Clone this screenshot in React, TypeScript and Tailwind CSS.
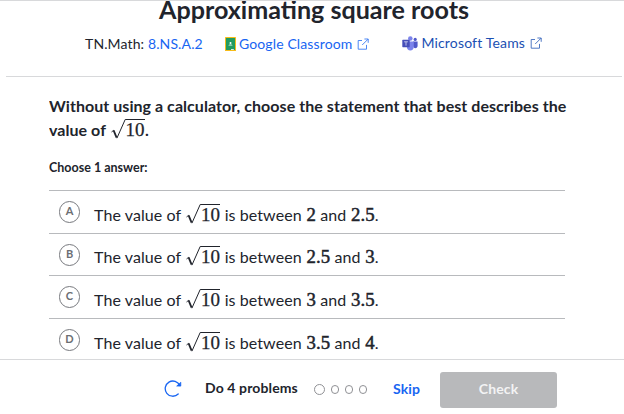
import type { ReactNode } from "react";

const ANSWERS = [
  { letter: "A", low: "2", high: "2.5" },
  { letter: "B", low: "2.5", high: "3" },
  { letter: "C", low: "3", high: "3.5" },
  { letter: "D", low: "3.5", high: "4" },
];

function Num({ children }: { children: ReactNode }) {
  return (
    <span className="ml-[0.5px] font-['Liberation_Serif',serif] text-[18.8px] leading-none tracking-[0.15px] [-webkit-text-stroke:0.5px_#21242c]">
      {children}
    </span>
  );
}

function Root({ children }: { children: ReactNode }) {
  return (
    <span className="mr-[0.5px] ml-[1px] inline-flex items-baseline">
      <svg width="15" height="20" viewBox="0 0 15 20" fill="none" className="self-start">
        <path d="M0.5 13 L2.8 11.2" stroke="#21242c" strokeWidth="0.9" />
        <path d="M2.6 11.4 L5.6 18.6" stroke="#21242c" strokeWidth="1.8" />
        <path d="M5.9 19.2 L14.2 0.5 H15" stroke="#21242c" strokeWidth="1" />
      </svg>
      <span className="border-t border-[#21242c] pt-[1px] font-['Liberation_Serif',serif] text-[19px] leading-[17px] font-normal tracking-normal [-webkit-text-stroke:0.25px_#21242c]">
        {children}
      </span>
    </span>
  );
}

function ExternalIcon() {
  return (
    <svg
      width="12"
      height="12"
      viewBox="0 0 12 12"
      fill="none"
      stroke="currentColor"
      strokeWidth="0.9"
      className="opacity-85"
    >
      <path d="M5 2.5H1.2v8.7h8.3V6.9" />
      <path d="M7.4 1h3.8v3.8M11.1 1.1 5.2 7" />
    </svg>
  );
}

function ClassroomIcon() {
  return (
    <svg width="11" height="14" viewBox="0 0 11 14">
      <rect width="11" height="14" rx=".6" fill="#f6bb18" />
      <rect x="1" y="1" width="9" height="12" fill="#219b61" />
      <circle cx="5.5" cy="6" r="1" fill="#fff" />
      <path d="M3.4 8.5c0-1.5 4.2-1.5 4.2 0z" fill="#e4f4eb" />
      <path d="M6 12h2.8v1H6z" fill="#d8eee2" />
    </svg>
  );
}

function TeamsIcon() {
  return (
    <svg width="16" height="15" viewBox="0 0 16 15">
      <circle cx="13.2" cy="3.4" r="1.6" fill="#5059c9" />
      <path d="M11 5.6h4.6v4.2c0 1.6-1 2.4-2.3 2.4-1.2 0-2.3-.8-2.3-2.4z" fill="#5059c9" />
      <circle cx="8.3" cy="2.5" r="2.3" fill="#7b83eb" />
      <path d="M4.8 5.6h7v5c0 2.4-1.5 4-3.5 4s-3.5-1.6-3.5-4z" fill="#7b83eb" />
      <rect x=".3" y="3.8" width="7.4" height="7.4" rx=".6" fill="#464eb8" />
      <path d="M2.1 5.8h3.8M4 5.8v3.8" stroke="#c9ccf0" strokeWidth=".9" />
    </svg>
  );
}

function RestartIcon() {
  return (
    <svg width="18" height="18" viewBox="0 0 18 18" fill="none" stroke="#1865f2" strokeWidth="1.3">
      <path d="M15.8 5.6A7.6 7.6 0 1 0 14.2 14" strokeLinecap="round" />
      <path d="M16.8 2.2v3.9h-4.1z" fill="#1865f2" strokeWidth="0.7" strokeLinejoin="round" />
    </svg>
  );
}

export default function App() {
  return (
    <div className="flex h-[414px] w-[624px] flex-col overflow-hidden border-t border-[#d8d9db] bg-white font-['Lato',sans-serif] text-[#21242c]">
      <header className="mr-[2px] ml-[6px] h-[76px] shrink-0 border-b border-[#d8d9db]">
        <h1 className="ml-[153px] h-[24px] text-[25.1px] leading-[17px] font-bold whitespace-nowrap">
          Approximating square roots
        </h1>
        <div className="mt-[8px] ml-[79px] flex h-[22px] items-center text-[14px] leading-[22px] tracking-[0.12px] whitespace-nowrap">
          <span className="w-[140px]">
            TN.Math: <a className="text-[#1865f2]">8.NS.A.2</a>
          </span>
          <a className="flex w-[177px] items-center text-[#1865f2]">
            <ClassroomIcon />
            <span className="mr-[5px] ml-[3px]">Google Classroom</span>
            <ExternalIcon />
          </a>
          <a className="-mt-[2px] flex items-center text-[#1b50b3]">
            <TeamsIcon />
            <span className="mr-[5px] ml-[3.4px] tracking-[0.17px]">Microsoft Teams</span>
            <ExternalIcon />
          </a>
        </div>
      </header>

      <main className="mx-[49px] min-h-0 flex-1 overflow-hidden">
        <div className="mt-[17px] text-[16px] leading-[24px] font-bold tracking-[0.05px] whitespace-nowrap">
          <p className="h-[24px]">Without using a calculator, choose the statement that best describes the</p>
          <p className="h-[24px]">
            value of <Root>10</Root>.
          </p>
        </div>
        <p className="mt-[16px] text-[12.5px] leading-[20px] font-bold">Choose 1 answer:</p>
        <ul className="mt-[12px] w-[516px]">
          {ANSWERS.map((a) => (
            <li key={a.letter} className="flex h-[42.6px] border-t border-[#b8babd] pl-[10px]">
              <span className="mt-[10px] flex h-[22px] w-[21px] items-center justify-center rounded-full border border-[#77797e] pb-[1px] text-[11px] font-bold text-[#6c6e73]">
                {a.letter}
              </span>
              <p className="mt-[11.8px] ml-[14px] h-[24px] text-[16px] leading-[24px] tracking-[0.08px] whitespace-nowrap">
                The value of <Root>10</Root> is between <Num>{a.low}</Num> and <Num>{a.high}</Num>.
              </p>
            </li>
          ))}
        </ul>
      </main>

      <footer className="flex h-[55px] shrink-0 items-start border-t border-[#d8d9db] pt-[12px] pl-[164px] whitespace-nowrap">
        <div className="flex h-[34px] w-[41px] items-center">
          <RestartIcon />
        </div>
        <span className="w-[109px] text-[14px] leading-[32px] font-bold tracking-[0.12px]">Do 4 problems</span>
        <div className="flex h-[34px] w-[79px] items-center gap-[6px]">
          <span className="size-[11px] rounded-full border border-[#909195]" />
          <span className="h-[9px] w-[8px] rounded-full border border-[#909195]" />
          <span className="h-[9px] w-[8px] rounded-full border border-[#909195]" />
          <span className="h-[9px] w-[8px] rounded-full border border-[#909195]" />
        </div>
        <button className="w-[47px] text-left text-[14px] leading-[34px] font-bold tracking-[0.12px] text-[#1865f2]">
          Skip
        </button>
        <button className="h-[36px] w-[117px] rounded-[3px] bg-[#b8b9bb] pb-[3px] text-[14px] font-bold tracking-[0.12px] text-[#f3f3f4]">
          Check
        </button>
      </footer>
    </div>
  );
}
